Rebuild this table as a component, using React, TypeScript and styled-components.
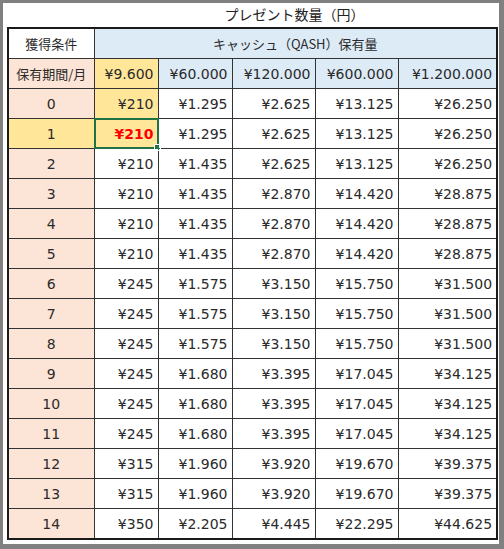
import React from "react"
import styled, { createGlobalStyle } from "styled-components"

const GlobalStyle = createGlobalStyle`
  html, body {
    margin: 0;
    padding: 0;
    background: #ffffff;
  }
  body {
    font-family: "DejaVu Sans", "Noto Sans CJK JP", sans-serif;
  }
`

const Frame = styled.div`
  box-sizing: border-box;
  width: 504px;
  height: 549px;
  border-style: solid;
  border-color: #808080;
  border-width: 3px 5px 5px 3px;
  background: #ffffff;
  padding: 0 0 0 4px;
  display: flex;
  flex-direction: column;
`

const TitleRow = styled.div`
  height: 24px;
  display: flex;
  align-items: center;
  padding-left: 86px;
  width: 403px;
`

const Title = styled.div`
  flex: 1;
  text-align: center;
  font-family: "Noto Sans CJK JP", sans-serif;
  font-size: 14px;
  color: #222;
  margin-top: -3px;
`

const Table = styled.table`
  border-collapse: collapse;
  table-layout: fixed;
  width: 489px;
  border: 2px solid #1a1a1a;
  font-size: 14px;
  color: #2a2a2a;
`

const HeadCell = styled.th<{ $bg: string; $align?: string; $jp?: boolean }>`
  height: 29px;
  padding: 0 4px;
  font-weight: normal;
  background: ${p => p.$bg};
  text-align: ${p => p.$align || "center"};
  border: 1px solid #333;
  white-space: nowrap;
  font-family: ${p => (p.$jp ? `"Noto Sans CJK JP", sans-serif` : `"DejaVu Sans", sans-serif`)};
  font-size: ${p => (p.$jp ? "13px" : "14px")};
`

const Cell = styled.td<{ $bg: string; $align?: string; $red?: boolean }>`
  height: 29px;
  padding: 0 4px;
  background: ${p => p.$bg};
  text-align: ${p => p.$align || "right"};
  border: 1px solid #333;
  white-space: nowrap;
  color: ${p => (p.$red ? "#ff0000" : "#2a2a2a")};
  font-weight: ${p => (p.$red ? "bold" : "normal")};
  position: relative;
`

const Selection = styled.div`
  position: absolute;
  inset: -1px;
  border: 2px solid #217346;
  pointer-events: none;
`

const Handle = styled.div`
  position: absolute;
  right: -4px;
  bottom: -4px;
  width: 5px;
  height: 5px;
  background: #217346;
  border: 1px solid #ffffff;
`

const PEACH = "#fce4d6"
const GOLD = "#ffe699"
const BLUE = "#ddebf7"
const WHITE = "#ffffff"

const amounts = ["¥9.600", "¥60.000", "¥120.000", "¥600.000", "¥1.200.000"]

const rows: string[][] = [
  ["¥210", "¥1.295", "¥2.625", "¥13.125", "¥26.250"],
  ["¥210", "¥1.295", "¥2.625", "¥13.125", "¥26.250"],
  ["¥210", "¥1.435", "¥2.625", "¥13.125", "¥26.250"],
  ["¥210", "¥1.435", "¥2.870", "¥14.420", "¥28.875"],
  ["¥210", "¥1.435", "¥2.870", "¥14.420", "¥28.875"],
  ["¥210", "¥1.435", "¥2.870", "¥14.420", "¥28.875"],
  ["¥245", "¥1.575", "¥3.150", "¥15.750", "¥31.500"],
  ["¥245", "¥1.575", "¥3.150", "¥15.750", "¥31.500"],
  ["¥245", "¥1.575", "¥3.150", "¥15.750", "¥31.500"],
  ["¥245", "¥1.680", "¥3.395", "¥17.045", "¥34.125"],
  ["¥245", "¥1.680", "¥3.395", "¥17.045", "¥34.125"],
  ["¥245", "¥1.680", "¥3.395", "¥17.045", "¥34.125"],
  ["¥315", "¥1.960", "¥3.920", "¥19.670", "¥39.375"],
  ["¥315", "¥1.960", "¥3.920", "¥19.670", "¥39.375"],
  ["¥350", "¥2.205", "¥4.445", "¥22.295", "¥44.625"],
]

const widths = [86, 64, 74, 83, 83, 99]

export default function App() {
  return (
    <>
      <GlobalStyle />
      <Frame>
        <TitleRow>
          <Title>プレゼント数量（円）</Title>
        </TitleRow>
        <Table>
          <colgroup>
            {widths.map((w, i) => (
              <col key={i} style={{ width: w }} />
            ))}
          </colgroup>
          <thead>
            <tr>
              <HeadCell $bg={WHITE} $jp>獲得条件</HeadCell>
              <HeadCell $bg={BLUE} $jp colSpan={5}>
                キャッシュ（QASH）保有量
              </HeadCell>
            </tr>
            <tr>
              <HeadCell $bg={PEACH} $jp>保有期間/月</HeadCell>
              {amounts.map((a, i) => (
                <HeadCell key={a} $bg={i === 0 ? GOLD : BLUE} $align="right">
                  {a}
                </HeadCell>
              ))}
            </tr>
          </thead>
          <tbody>
            {rows.map((r, m) => (
              <tr key={m}>
                <Cell $bg={m === 1 ? GOLD : PEACH} $align="center">
                  {m}
                </Cell>
                {r.map((v, i) => {
                  const active = m === 1 && i === 0
                  return (
                    <Cell key={i} $bg={i === 0 && m < 2 ? GOLD : WHITE} $red={active}>
                      {v}
                      {active && (
                        <Selection>
                          <Handle />
                        </Selection>
                      )}
                    </Cell>
                  )
                })}
              </tr>
            ))}
          </tbody>
        </Table>
      </Frame>
    </>
  )
}
